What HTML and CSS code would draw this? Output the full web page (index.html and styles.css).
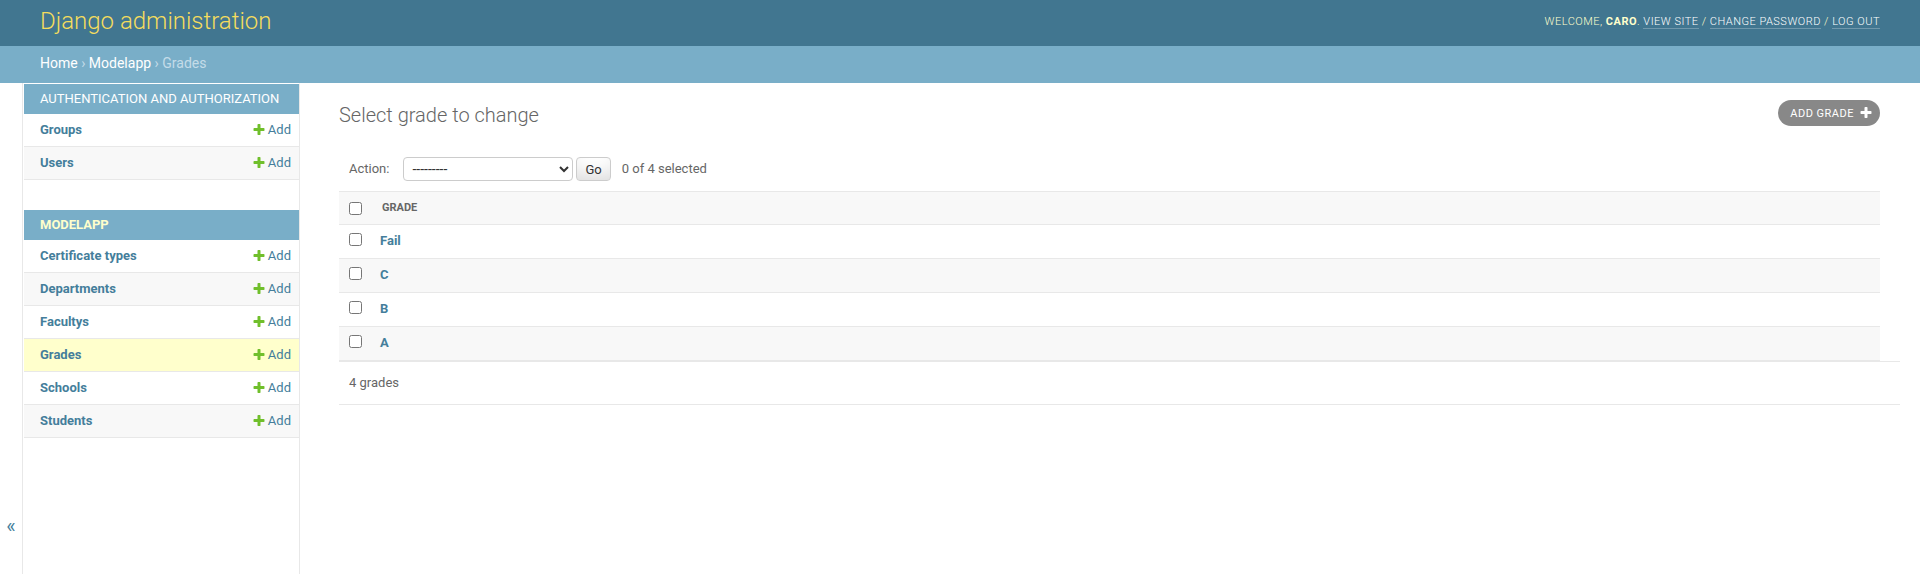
FILE: index.html
```html
<!DOCTYPE html>
<html lang="en">
<head>
<meta charset="utf-8">
<title>Select grade to change | Django site admin</title>
<link rel="stylesheet" href="styles.css">
</head>
<body>
<div class="container">
  <header class="site-header">
    <h1 class="site-name"><a href="#">Django administration</a></h1>
    <div class="user-tools">Welcome, <strong>caro</strong>. <a href="#">View site</a> / <a href="#">Change password</a> / <a href="#">Log out</a></div>
  </header>
  <div class="breadcrumbs"><a href="#">Home</a> › <a href="#">Modelapp</a> › Grades</div>
  <div class="main">
    <div class="toggle-nav" role="button" aria-label="Toggle navigation">«</div>
    <nav class="nav-sidebar">
      <div class="module">
        <table>
          <caption><a href="#" class="section">Authentication and Authorization</a></caption>
          <tr><th><a href="#">Groups</a></th><td><a href="#" class="addlink"><svg class="plus" viewBox="0 0 1792 1792" width="14" height="14"><path fill="#70bf2b" d="M1600 736v192q0 40-28 68t-68 28h-416v416q0 40-28 68t-68 28h-192q-40 0-68-28t-28-68v-416h-416q-40 0-68-28t-28-68v-192q0-40 28-68t68-28h416v-416q0-40 28-68t68-28h192q40 0 68 28t28 68v416h416q40 0 68 28t28 68z"/></svg>Add</a></td></tr>
          <tr><th><a href="#">Users</a></th><td><a href="#" class="addlink"><svg class="plus" viewBox="0 0 1792 1792" width="14" height="14"><path fill="#70bf2b" d="M1600 736v192q0 40-28 68t-68 28h-416v416q0 40-28 68t-68 28h-192q-40 0-68-28t-28-68v-416h-416q-40 0-68-28t-28-68v-192q0-40 28-68t68-28h416v-416q0-40 28-68t68-28h192q40 0 68 28t28 68v416h416q40 0 68 28t28 68z"/></svg>Add</a></td></tr>
        </table>
      </div>
      <div class="module current-app">
        <table>
          <caption><a href="#" class="section">Modelapp</a></caption>
          <tr><th><a href="#">Certificate types</a></th><td><a href="#" class="addlink"><svg class="plus" viewBox="0 0 1792 1792" width="14" height="14"><path fill="#70bf2b" d="M1600 736v192q0 40-28 68t-68 28h-416v416q0 40-28 68t-68 28h-192q-40 0-68-28t-28-68v-416h-416q-40 0-68-28t-28-68v-192q0-40 28-68t68-28h416v-416q0-40 28-68t68-28h192q40 0 68 28t28 68v416h416q40 0 68 28t28 68z"/></svg>Add</a></td></tr>
          <tr><th><a href="#">Departments</a></th><td><a href="#" class="addlink"><svg class="plus" viewBox="0 0 1792 1792" width="14" height="14"><path fill="#70bf2b" d="M1600 736v192q0 40-28 68t-68 28h-416v416q0 40-28 68t-68 28h-192q-40 0-68-28t-28-68v-416h-416q-40 0-68-28t-28-68v-192q0-40 28-68t68-28h416v-416q0-40 28-68t68-28h192q40 0 68 28t28 68v416h416q40 0 68 28t28 68z"/></svg>Add</a></td></tr>
          <tr><th><a href="#">Facultys</a></th><td><a href="#" class="addlink"><svg class="plus" viewBox="0 0 1792 1792" width="14" height="14"><path fill="#70bf2b" d="M1600 736v192q0 40-28 68t-68 28h-416v416q0 40-28 68t-68 28h-192q-40 0-68-28t-28-68v-416h-416q-40 0-68-28t-28-68v-192q0-40 28-68t68-28h416v-416q0-40 28-68t68-28h192q40 0 68 28t28 68v416h416q40 0 68 28t28 68z"/></svg>Add</a></td></tr>
          <tr class="current-model"><th><a href="#">Grades</a></th><td><a href="#" class="addlink"><svg class="plus" viewBox="0 0 1792 1792" width="14" height="14"><path fill="#70bf2b" d="M1600 736v192q0 40-28 68t-68 28h-416v416q0 40-28 68t-68 28h-192q-40 0-68-28t-28-68v-416h-416q-40 0-68-28t-28-68v-192q0-40 28-68t68-28h416v-416q0-40 28-68t68-28h192q40 0 68 28t28 68v416h416q40 0 68 28t28 68z"/></svg>Add</a></td></tr>
          <tr><th><a href="#">Schools</a></th><td><a href="#" class="addlink"><svg class="plus" viewBox="0 0 1792 1792" width="14" height="14"><path fill="#70bf2b" d="M1600 736v192q0 40-28 68t-68 28h-416v416q0 40-28 68t-68 28h-192q-40 0-68-28t-28-68v-416h-416q-40 0-68-28t-28-68v-192q0-40 28-68t68-28h416v-416q0-40 28-68t68-28h192q40 0 68 28t28 68v416h416q40 0 68 28t28 68z"/></svg>Add</a></td></tr>
          <tr><th><a href="#">Students</a></th><td><a href="#" class="addlink"><svg class="plus" viewBox="0 0 1792 1792" width="14" height="14"><path fill="#70bf2b" d="M1600 736v192q0 40-28 68t-68 28h-416v416q0 40-28 68t-68 28h-192q-40 0-68-28t-28-68v-416h-416q-40 0-68-28t-28-68v-192q0-40 28-68t68-28h416v-416q0-40 28-68t68-28h192q40 0 68 28t28 68v416h416q40 0 68 28t28 68z"/></svg>Add</a></td></tr>
        </table>
      </div>
    </nav>
    <main class="content">
      <div class="content-head">
        <h1>Select grade to change</h1>
        <ul class="object-tools">
          <li><a href="#" class="addlink-tool">Add grade<svg class="plus-white" viewBox="0 0 1792 1792" width="14" height="14"><path fill="#fff" d="M1600 736v192q0 40-28 68t-68 28h-416v416q0 40-28 68t-68 28h-192q-40 0-68-28t-28-68v-416h-416q-40 0-68-28t-28-68v-192q0-40 28-68t68-28h416v-416q0-40 28-68t68-28h192q40 0 68 28t28 68v416h416q40 0 68 28t28 68z"/></svg></a></li>
        </ul>
      </div>
      <div class="changelist">
        <div class="actions">
          <label for="action">Action:</label>
          <select id="action" name="action">
            <option>---------</option>
            <option>Delete selected grades</option>
          </select>
          <button type="button" class="button">Go</button>
          <span class="action-counter">0 of 4 selected</span>
        </div>
        <table class="result-list">
          <thead>
            <tr>
              <th class="action-checkbox"><input type="checkbox" aria-label="Select all"></th>
              <th><span class="text">Grade</span></th>
            </tr>
          </thead>
          <tbody>
            <tr class="row1"><td class="action-checkbox"><input type="checkbox"></td><th><a href="#">Fail</a></th></tr>
            <tr class="row2"><td class="action-checkbox"><input type="checkbox"></td><th><a href="#">C</a></th></tr>
            <tr class="row1"><td class="action-checkbox"><input type="checkbox"></td><th><a href="#">B</a></th></tr>
            <tr class="row2"><td class="action-checkbox"><input type="checkbox"></td><th><a href="#">A</a></th></tr>
          </tbody>
        </table>
        <p class="paginator">4 grades</p>
      </div>
    </main>
  </div>
</div>
</body>
</html>
```

FILE: styles.css
```css
* {
  box-sizing: border-box;
}

html,
body {
  margin: 0;
  padding: 0;
  height: 100%;
}

body {
  font-family: Roboto, "Liberation Sans", Arial, sans-serif;
  font-size: 14px;
  color: #333;
  background: #fff;
  overflow: hidden;
}

a {
  color: #447e9b;
  text-decoration: none;
}

.container {
  display: flex;
  flex-direction: column;
  min-height: 100%;
}

/* Header */
.site-header {
  display: flex;
  justify-content: space-between;
  align-items: center;
  padding: 8px 40px 12px;
  background: #417690;
  color: #ffc;
}

.site-name {
  margin: 0;
  font-size: 24px;
  font-weight: 300;
  line-height: 26px;
}

.site-name a {
  color: #f5dd5d;
}

.user-tools {
  font-size: 11px;
  font-weight: 300;
  letter-spacing: 0.5px;
  text-transform: uppercase;
  color: #ffc;
}

.user-tools strong {
  font-weight: 700;
}

.user-tools a {
  color: #fff;
  border-bottom: 1px solid rgba(255, 255, 255, 0.25);
}

/* Breadcrumbs */
.breadcrumbs {
  background: #79aec8;
  color: #c4dce8;
  padding: 9px 40px 11px;
  font-size: 14px;
  line-height: 17px;
}

.breadcrumbs a {
  color: #fff;
}

/* Main */
.main {
  display: flex;
  flex: 1;
}

.toggle-nav {
  flex: 0 0 23px;
  border-right: 1px solid #e8e8e8;
  color: #447e9b;
  font-size: 20px;
  line-height: 20px;
  padding-top: 433px;
  text-align: center;
  cursor: pointer;
}

.nav-sidebar {
  flex: 0 0 277px;
  border-top: 1px solid transparent;
  border-left: 1px solid transparent;
  border-right: 1px solid #e8e8e8;
}

.module {
  margin-bottom: 30px;
}

.module table {
  width: 100%;
  border-collapse: collapse;
}

.module caption {
  background: #79aec8;
  text-align: left;
  font-size: 13px;
  line-height: 14px;
  padding: 8px 16px;
  text-transform: uppercase;
  white-space: nowrap;
}

.module caption a {
  color: #fff;
}

.current-app caption a {
  color: #ffc;
  font-weight: 700;
}

.module th,
.module td {
  font-size: 13px;
  line-height: 16px;
  padding: 8px;
  border-bottom: 1px solid #e8e8e8;
  vertical-align: top;
}

.module th {
  text-align: left;
  font-weight: 700;
  padding-left: 16px;
  width: 100%;
}

.module td {
  text-align: right;
  white-space: nowrap;
}

.module tr:nth-child(even) {
  background: #f8f8f8;
}

.module tr.current-model {
  background: #ffc;
}

.addlink {
  display: inline-flex;
  align-items: center;
  vertical-align: top;
  height: 16px;
}

.addlink .plus {
  margin-right: 2px;
}

/* Content */
.content {
  flex: 1;
  min-width: 0;
  padding: 20px 40px 20px 39px;
}

.content-head {
  display: flex;
  justify-content: space-between;
  align-items: flex-start;
  margin-bottom: 20px;
}

.content-head h1 {
  margin: 0;
  font-size: 20px;
  font-weight: 300;
  line-height: 24px;
  color: #666;
}

.object-tools {
  list-style: none;
  margin: -3px 0 0;
  padding: 0;
}

.addlink-tool {
  display: flex;
  align-items: center;
  height: 26px;
  padding: 0 7px 0 12px;
  background: #888;
  color: #fff;
  border-radius: 15px;
  font-size: 11px;
  letter-spacing: 0.5px;
  text-transform: uppercase;
}

.plus-white {
  margin-left: 5px;
}

/* Actions */
.actions {
  display: flex;
  align-items: center;
  padding: 10px;
  line-height: 24px;
  font-size: 13px;
  color: #666;
}

.actions label {
  margin-right: 14px;
}

.actions select {
  width: 170px;
  height: 24px;
  margin: 0;
  padding: 0 0 0 4px;
  border: 1px solid #ccc;
  border-radius: 4px;
  background: #fff;
  color: #333;
  font-family: inherit;
  font-size: 14px;
}

.actions .button {
  margin: 0 0 0 3px;
  height: 24px;
  padding: 4px 8px;
  border: 1px solid #ccc;
  border-radius: 4px;
  background: #fff;
  box-shadow: 0 -15px 20px -10px rgba(0, 0, 0, 0.15) inset;
  color: #333;
  font-family: inherit;
  font-size: 13px;
  line-height: 1;
  cursor: pointer;
}

.action-counter {
  margin-left: 11px;
}

/* Result list */
.result-list {
  width: 100%;
  border-collapse: collapse;
}

.result-list thead th {
  background: #f8f8f8;
  border-top: 1px solid #e8e8e8;
  border-bottom: 1px solid #e8e8e8;
  padding: 0;
  color: #666;
  font-size: 11px;
  font-weight: 700;
  text-transform: uppercase;
  text-align: left;
  vertical-align: middle;
}

.result-list thead th .text {
  display: block;
  padding: 8px 10px;
  line-height: 16px;
}

.result-list thead th.action-checkbox {
  padding: 0 10px;
}

.result-list input[type="checkbox"] {
  display: block;
  margin: 0;
  width: 13px;
  height: 13px;
}

.result-list tbody td,
.result-list tbody th {
  padding: 8px 8px 9px;
  font-size: 13px;
  line-height: 16px;
  border-bottom: 1px solid #e8e8e8;
  vertical-align: top;
  text-align: left;
}

.result-list tbody th {
  font-weight: 700;
}

.result-list .action-checkbox {
  width: 33px;
}

.result-list tbody td.action-checkbox {
  padding: 8px 10px 9px;
}

.result-list tr.row2 {
  background: #f8f8f8;
}

.paginator {
  box-sizing: content-box;
  width: 100%;
  margin: 0;
  padding: 10px;
  font-size: 13px;
  line-height: 22px;
  color: #666;
  border-top: 1px solid #e8e8e8;
  border-bottom: 1px solid #e8e8e8;
}
```
